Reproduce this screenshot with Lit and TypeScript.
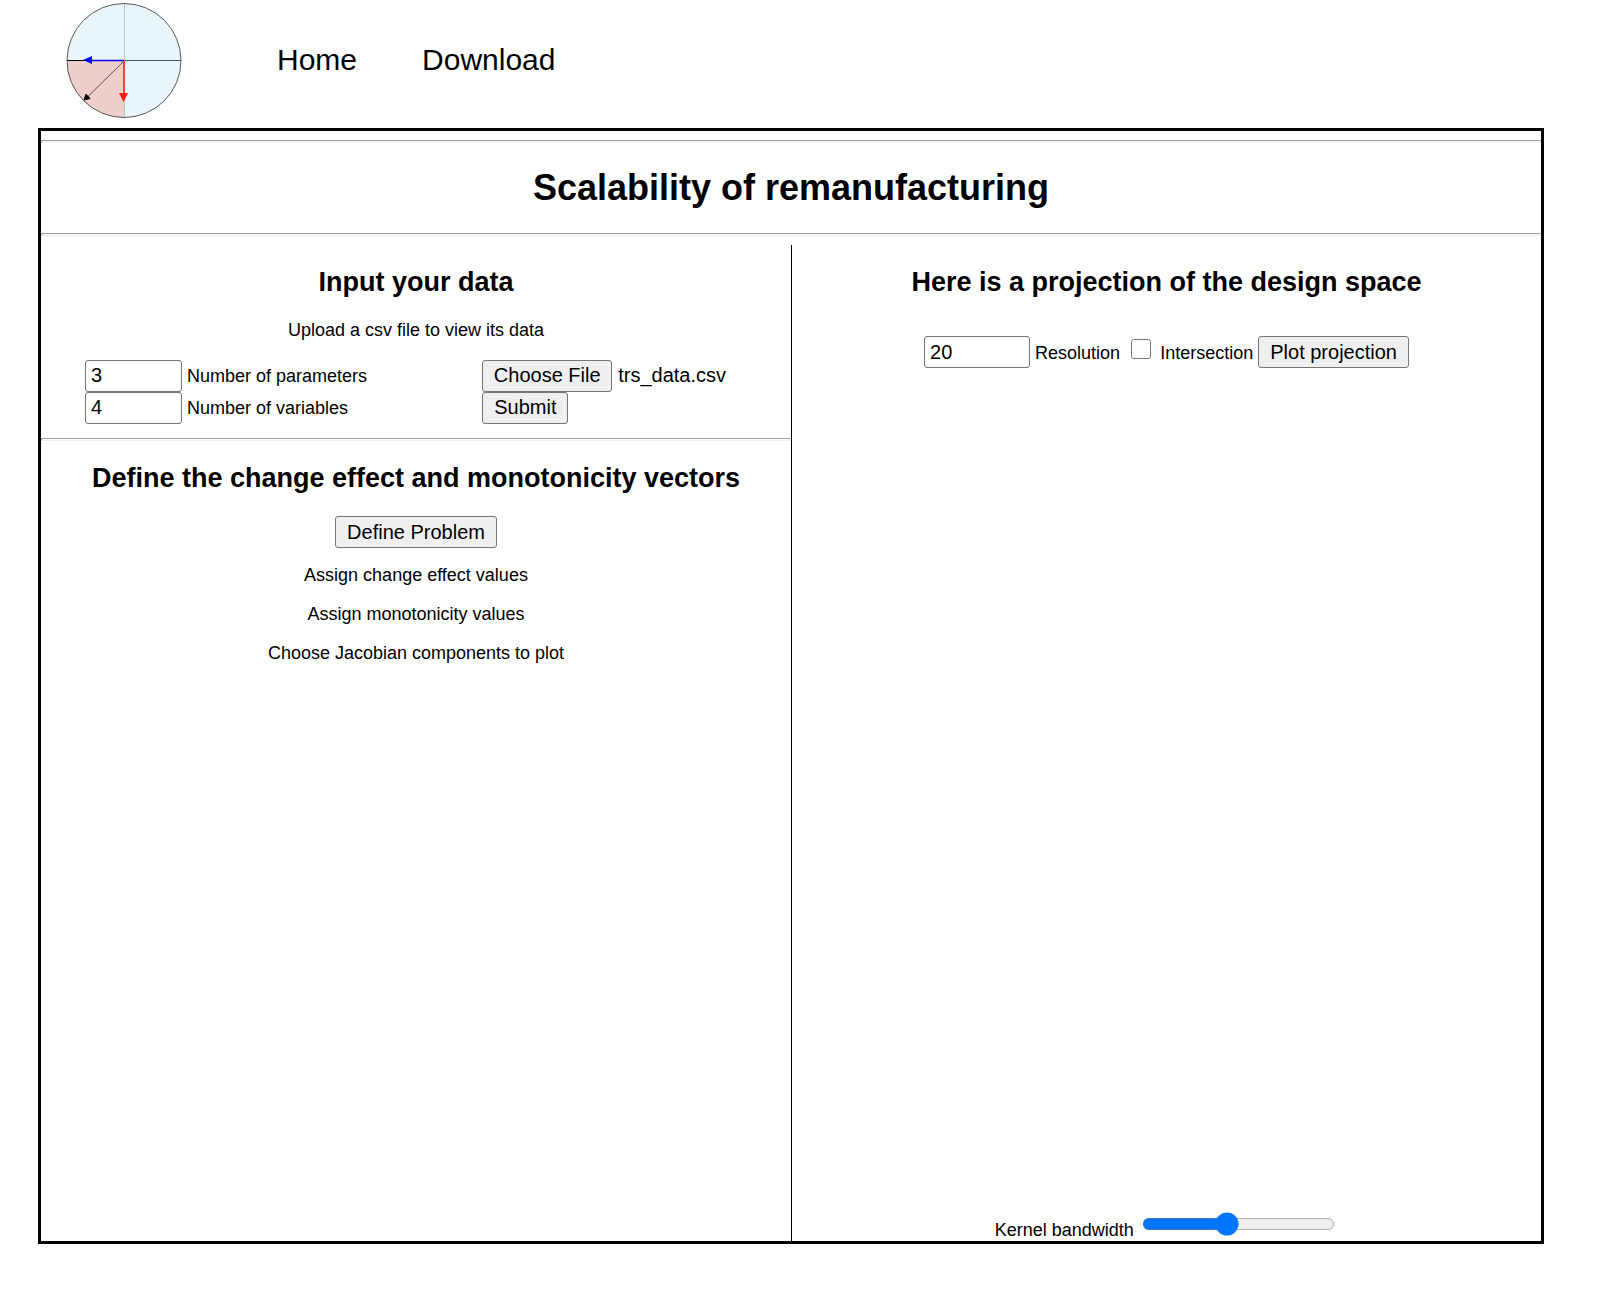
import { LitElement, html, css } from "lit";
import { customElement, query } from "lit/decorators.js";

@customElement("app-logo")
class AppLogo extends LitElement {
  static styles = css`
    :host {
      display: block;
    }
    .mark {
      display: block;
      width: 116px;
      height: 116px;
    }
  `;

  render() {
    return html`
      <svg class="mark" viewBox="0 0 116 116" aria-hidden="true">
        <circle cx="58" cy="58.5" r="57" fill="#e9f5f8" />
        <path d="M58 58.5H1A57 57 0 0 0 58 115.5Z" fill="#efcfcc" />
        <path d="M58.5 1.5V115.5" stroke="#b5c4c6" stroke-width="1" />
        <path d="M58 58.5H115" stroke="#45595d" stroke-width="1" />
        <path d="M1 58.5H58" stroke="#000" stroke-width="1" />
        <circle cx="58" cy="58.5" r="57" fill="none" stroke="#333" stroke-width="0.8" />
        <path d="M58 59L22 94.5" stroke="#5f5050" stroke-width="1" />
        <path d="M18 98L20 92L24 96.5Z" fill="#000" stroke="#000" />
        <path d="M58 58V92" stroke="#ff4040" stroke-width="2" />
        <path d="M53 91H62L57.500 100Z" fill="#ff1a0a" />
        <path d="M58 58.500H25" stroke="#0000ff" stroke-width="1.500" />
        <path d="M17 58L26 54V62Z" fill="#0000ff" />
      </svg>
    `;
  }
}

@customElement("app-root")
class AppRoot extends LitElement {
  @query(".file") private fileInput!: HTMLInputElement;

  static styles = css`
    :host {
      display: flex;
      flex-direction: column;
      box-sizing: border-box;
      min-height: 100vh;
      padding: 0 59px 64px 38px;
      background: #fff;
      color: #000;
      font-family: "Liberation Sans", Arial, sans-serif;
      font-size: 18px;
      line-height: 21px;
    }
    .top {
      display: flex;
      align-items: center;
      padding: 2px 0 10px 28px;
    }
    .nav {
      display: flex;
      gap: 65px;
      margin-left: 95px;
    }
    .link {
      color: inherit;
      text-decoration: none;
      font-size: 30px;
      line-height: 34px;
    }
    .frame {
      flex: 1;
      display: flex;
      flex-direction: column;
      border: 3px solid #000;
    }
    .rule {
      box-sizing: border-box;
      width: 100%;
      height: 3px;
      margin: 0;
      border: 1px solid;
      border-color: #9a9a9a #eee #eee #9a9a9a;
    }
    .banner {
      padding: 9px 0;
    }
    .title {
      margin: 24px 0;
      font-size: 36px;
      line-height: 42px;
      text-align: center;
    }
    .columns {
      flex: 1;
      display: grid;
      grid-template-columns: 1fr 1fr;
    }
    .panel {
      display: flex;
      flex-direction: column;
      text-align: center;
    }
    .panel + .panel {
      border-left: 1px solid #000;
    }
    .heading {
      margin: 22px 0;
      font-size: 27px;
      line-height: 31px;
    }
    .note {
      margin: 0 0 18px;
    }
    .upload {
      display: grid;
      grid-template-columns: 3fr 2fr;
      padding: 1px 44px 14px;
      text-align: left;
    }
    .field {
      height: 32px;
      white-space: nowrap;
    }
    .number,
    .button,
    .file,
    .file::file-selector-button {
      font-family: inherit;
      font-size: 20px;
    }
    .number {
      box-sizing: border-box;
      width: 97px;
      height: 32px;
      padding: 1px 5px 3px;
      border: 1px solid #767676;
      border-radius: 3px;
      background: #fff;
      color: #000;
    }
    .button,
    .file::file-selector-button {
      box-sizing: border-box;
      height: 32px;
      padding: 0 11px 2px;
      border: 1px solid #767676;
      border-radius: 3px;
      background: #efefef;
      color: #000;
    }
    .file::file-selector-button {
      width: 130px;
      padding: 0 0 2px;
      margin-right: 6px;
    }
    .file {
      width: 100%;
      height: 32px;
    }
    .define {
      align-self: center;
      margin-bottom: 17px;
    }
    .define,
    .controls .button {
      padding-top: 1px;
      padding-bottom: 0;
    }
    .controls {
      padding-top: 15px;
    }
    .controls .number {
      width: 106px;
      padding-top: 3px;
      padding-bottom: 2px;
    }
    .check {
      width: 20px;
      height: 20px;
      margin: 4px 4px 4px 6px;
    }
    .bandwidth {
      margin-top: auto;
    }
    .range {
      zoom: 1.5;
    }
  `;

  firstUpdated() {
    const transfer = new DataTransfer();
    transfer.items.add(new File([""], "trs_data.csv", { type: "text/csv" }));
    this.fileInput.files = transfer.files;
  }

  render() {
    return html`
      <header class="top">
        <app-logo></app-logo>
        <nav class="nav">
          <a class="link" href="#home">Home</a>
          <a class="link" href="#download">Download</a>
        </nav>
      </header>
      <main class="frame">
        <div class="banner">
          <hr class="rule" />
          <h1 class="title">Scalability of remanufacturing</h1>
          <hr class="rule" />
        </div>
        <div class="columns">
          <section class="panel">
            <h2 class="heading">Input your data</h2>
            <p class="note">Upload a csv file to view its data</p>
            <form class="upload" @submit=${(e: Event) => e.preventDefault()}>
              <div class="field">
                <input class="number" id="parameters" type="text" inputmode="numeric" value="3" />
                <label for="parameters">Number of parameters</label>
              </div>
              <input class="file" type="file" accept=".csv" aria-label="Data file" />
              <div class="field">
                <input class="number" id="variables" type="text" inputmode="numeric" value="4" />
                <label for="variables">Number of variables</label>
              </div>
              <div class="field"><button class="button" type="submit">Submit</button></div>
            </form>
            <hr class="rule" />
            <h2 class="heading">Define the change effect and monotonicity vectors</h2>
            <button class="button define" type="button">Define Problem</button>
            <p class="note">Assign change effect values</p>
            <p class="note">Assign monotonicity values</p>
            <p class="note">Choose Jacobian components to plot</p>
          </section>
          <section class="panel">
            <h2 class="heading">Here is a projection of the design space</h2>
            <div class="controls">
              <input class="number" id="resolution" type="text" inputmode="numeric" value="20" />
              <label for="resolution">Resolution</label>
              <input class="check" id="intersection" type="checkbox" />
              <label for="intersection">Intersection</label>
              <button class="button" type="button">Plot projection</button>
            </div>
            <div class="bandwidth">
              <label for="bandwidth">Kernel bandwidth</label>
              <input class="range" id="bandwidth" type="range" min="0" max="100" value="43" />
            </div>
          </section>
        </div>
      </main>
    `;
  }
}
